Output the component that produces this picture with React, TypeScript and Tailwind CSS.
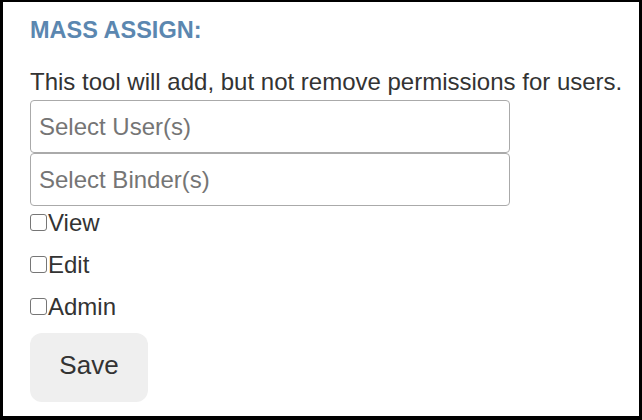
export default function App() {
  const perms = ["View", "Edit", "Admin"];

  return (
    <div className="box-border h-[420px] w-[642px] border-t-2 border-r-[3px] border-b-4 border-l-[3px] border-black bg-white pt-[14px] pl-[27px] font-['Liberation_Sans',Arial,sans-serif] text-[#333]">
      <h2 className="text-[23.5px] font-bold leading-[28px] text-[#5b87b0]">
        MASS ASSIGN:
      </h2>
      <p className="mt-[24px] text-[24px] leading-[28px]">
        This tool will add, but not remove permissions for users.
      </p>
      <div className="mt-[4px] flex w-[480px] flex-col">
        <input
          type="text"
          placeholder="Select User(s)"
          className="box-border h-[53px] w-full rounded-[4px] border border-[#aaa] px-2 text-[24px] outline-none placeholder:text-[#757575]"
        />
        <input
          type="text"
          placeholder="Select Binder(s)"
          className="box-border h-[53px] w-full rounded-[4px] border border-[#aaa] px-2 text-[24px] outline-none placeholder:text-[#757575]"
        />
      </div>
      <div className="mt-[3px] flex flex-col gap-[14px]">
        {perms.map((p) => (
          <label key={p} className="block text-[24px] leading-[28px]">
            <input
              type="checkbox"
              className="mr-[1px] inline-block h-[17px] w-[17px] shrink-0 appearance-none rounded-[3px] border-[1.5px] border-[#767676] bg-white align-baseline"
            />
            {p}
          </label>
        ))}
      </div>
      <button
        type="button"
        className="mt-[12px] h-[69px] w-[118px] rounded-[12px] bg-[#efefef] pb-[4px] text-[26px] text-[#333]"
      >
        Save
      </button>
    </div>
  );
}
